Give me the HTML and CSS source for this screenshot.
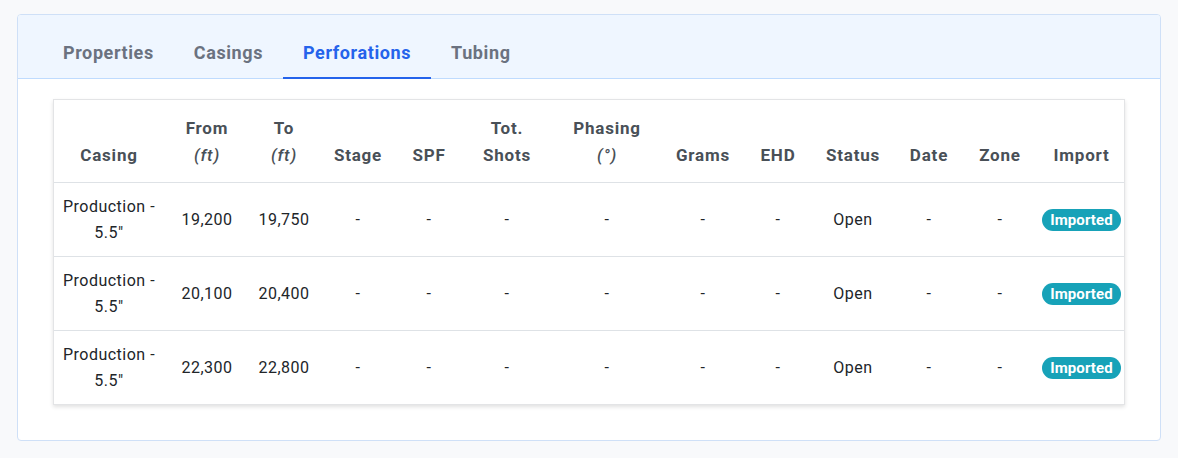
FILE: index.html
```html
<!DOCTYPE html>
<html lang="en">
<head>
    <meta charset="UTF-8">
    <meta name="viewport" content="width=device-width, initial-scale=1.0">
    <title>Well Perforations</title>
    <link rel="stylesheet" href="styles.css">
</head>
<body>
    <div class="card">
        <div class="card-header">
            <ul class="tabs">
                <li class="tab">Properties</li>
                <li class="tab">Casings</li>
                <li class="tab active">Perforations</li>
                <li class="tab">Tubing</li>
            </ul>
        </div>
        <div class="card-body">
            <div class="table-wrap">
                <table class="perf-table">
                    <colgroup>
                        <col class="c-casing">
                        <col class="c-from">
                        <col class="c-to">
                        <col class="c-stage">
                        <col class="c-spf">
                        <col class="c-shots">
                        <col class="c-phasing">
                        <col class="c-grams">
                        <col class="c-ehd">
                        <col class="c-status">
                        <col class="c-date">
                        <col class="c-zone">
                        <col class="c-import">
                    </colgroup>
                    <thead>
                        <tr>
                            <th>Casing</th>
                            <th>From<br><em>(ft)</em></th>
                            <th>To<br><em>(ft)</em></th>
                            <th>Stage</th>
                            <th>SPF</th>
                            <th>Tot.<br>Shots</th>
                            <th>Phasing<br><em>(°)</em></th>
                            <th>Grams</th>
                            <th>EHD</th>
                            <th>Status</th>
                            <th>Date</th>
                            <th>Zone</th>
                            <th>Import</th>
                        </tr>
                    </thead>
                    <tbody>
                        <tr>
                            <td>Production - 5.5"</td>
                            <td>19,200</td>
                            <td>19,750</td>
                            <td>-</td>
                            <td>-</td>
                            <td>-</td>
                            <td>-</td>
                            <td>-</td>
                            <td>-</td>
                            <td>Open</td>
                            <td>-</td>
                            <td>-</td>
                            <td><span class="badge">Imported</span></td>
                        </tr>
                        <tr>
                            <td>Production - 5.5"</td>
                            <td>20,100</td>
                            <td>20,400</td>
                            <td>-</td>
                            <td>-</td>
                            <td>-</td>
                            <td>-</td>
                            <td>-</td>
                            <td>-</td>
                            <td>Open</td>
                            <td>-</td>
                            <td>-</td>
                            <td><span class="badge">Imported</span></td>
                        </tr>
                        <tr>
                            <td>Production - 5.5"</td>
                            <td>22,300</td>
                            <td>22,800</td>
                            <td>-</td>
                            <td>-</td>
                            <td>-</td>
                            <td>-</td>
                            <td>-</td>
                            <td>-</td>
                            <td>Open</td>
                            <td>-</td>
                            <td>-</td>
                            <td><span class="badge">Imported</span></td>
                        </tr>
                    </tbody>
                </table>
            </div>
        </div>
    </div>
</body>
</html>
```

FILE: styles.css
```css
:root {
    --page-bg: #f8f9fb;
    --card-border: #cfe0f7;
    --header-bg: #eff6ff;
    --header-border: #bfdbfe;
    --tab-text: #6b7280;
    --tab-active: #2563eb;
    --head-text: #495057;
    --cell-text: #212529;
    --row-border: #dee2e6;
    --badge-bg: #17a2b8;
}

body {
    font-family: Roboto, 'Noto Sans', sans-serif;
    background-color: var(--page-bg);
    margin: 0;
    padding: 14px 17px 19px;
}

.card {
    background: #fff;
    border: 1px solid var(--card-border);
    border-radius: 4px;
    overflow: hidden;
}

.card-header {
    background: var(--header-bg);
    border-bottom: 1px solid var(--header-border);
    padding: 17px 25px 0;
}

.tabs {
    display: flex;
    list-style: none;
    margin: 0 0 -1px;
    padding: 0;
}

.tab {
    font-size: 18px;
    font-weight: 700;
    line-height: 24px;
    color: var(--tab-text);
    padding: 9px 20px 12px;
    border-bottom: 2px solid transparent;
    letter-spacing: 0.6px;
}

.tab.active {
    color: var(--tab-active);
    border-bottom-color: var(--tab-active);
}

.card-body {
    padding: 20px 35px 35px;
}

.table-wrap {
    border: 1px solid #e3e4e6;
    box-shadow: 0 2px 4px rgba(0, 0, 0, 0.12);
    overflow: hidden;
}

.perf-table {
    width: 100%;
    border-collapse: collapse;
    table-layout: fixed;
    text-align: center;
}

.c-casing { width: 110px; }
.c-from { width: 86px; }
.c-to { width: 68px; }
.c-stage { width: 80px; }
.c-spf { width: 62px; }
.c-shots { width: 94px; }
.c-phasing { width: 106px; }
.c-grams { width: 86px; }
.c-ehd { width: 64px; }
.c-status { width: 86px; }
.c-date { width: 66px; }
.c-zone { width: 76px; }
.c-import { width: 87px; }

.perf-table th {
    font-size: 17px;
    font-weight: 700;
    line-height: 27px;
    letter-spacing: 0.8px;
    color: var(--head-text);
    vertical-align: bottom;
    padding: 15px 2px 13px;
    border-bottom: 1px solid var(--row-border);
}

.perf-table th em {
    font-weight: 500;
}

.perf-table td {
    font-size: 16px;
    line-height: 26px;
    letter-spacing: 0.5px;
    color: var(--cell-text);
    padding: 11px 4px 10px;
    border-bottom: 1px solid var(--row-border);
    vertical-align: middle;
}

.perf-table tbody tr:last-child td {
    border-bottom: none;
}

.badge {
    display: inline-block;
    background: var(--badge-bg);
    color: #fff;
    font-size: 15px;
    font-weight: 700;
    line-height: 18px;
    letter-spacing: 0.1px;
    padding: 2px 8px;
    border-radius: 11px;
    white-space: nowrap;
}
```
